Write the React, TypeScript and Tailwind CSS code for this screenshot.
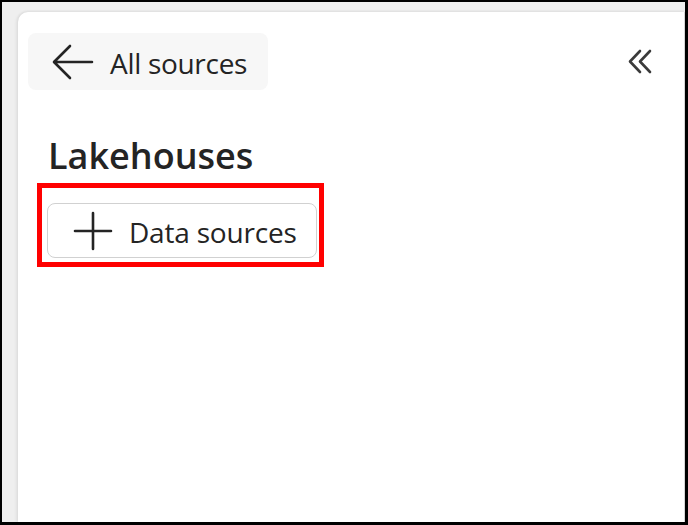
import React from "react";

const font = { fontFamily: '"Open Sans", "Noto Sans", Arial, sans-serif' };

function ArrowLeft() {
  return (
    <svg width="42" height="36" viewBox="0 0 42 36" fill="none">
      <path d="M40 18H3M18 2L2 18l16 16" stroke="#242424" strokeWidth="2.6" strokeLinecap="round" strokeLinejoin="round" />
    </svg>
  );
}

function ChevronsLeft() {
  return (
    <svg width="25" height="25" viewBox="0 0 25 25" fill="none">
      <path d="M13 2L3 12.5 13 23M23 2L13 12.5 23 23" stroke="#3b3b3b" strokeWidth="2.6" strokeLinecap="round" strokeLinejoin="round" />
    </svg>
  );
}

function Plus() {
  return (
    <svg width="40" height="40" viewBox="0 0 40 40" fill="none">
      <path d="M20 2v36M2 20h36" stroke="#242424" strokeWidth="2.6" strokeLinecap="round" />
    </svg>
  );
}

export default function App() {
  return (
    <div className="w-[688px] h-[525px] box-border border-l-2 border-t-2 border-r-[3px] border-b-[3px] border-black bg-[#efefef] flex" style={font}>
      <div className="flex-1 flex pl-[16px] pt-[10px]">
        <div className="flex-1 bg-white rounded-tl-[10px] border-r border-[#d6d6d6] shadow-[-2px_0_3px_rgba(0,0,0,0.06),0_-1px_3px_rgba(0,0,0,0.05)] flex flex-col pt-[21px]">
          <div className="flex items-center justify-between pl-[10px] pr-[32px]">
            <div className="h-[57px] w-[240px] rounded-[8px] bg-[#f7f7f7] flex items-center pl-[24px] gap-[16px]">
              <ArrowLeft />
              <span className="text-[28px] text-[#242424] leading-none tracking-[-0.3px] pt-[3px]">All sources</span>
            </div>
            <ChevronsLeft />
          </div>
          <h2 className="mt-[48px] pl-[30px] text-[36px] font-semibold text-[#242424] leading-none">Lakehouses</h2>
          <div className="mt-[9px] ml-[19px] w-[287px] h-[84px] box-border border-[5px] border-[#ff0000] pl-[5px] pt-[15px]">
            <div className="w-[270px] h-[55px] box-border rounded-[8px] border border-[#d1d1d1] flex items-center pl-[25px] gap-[16px]">
              <Plus />
              <span className="text-[28px] text-[#242424] leading-none tracking-[-0.2px] pt-[3px]">Data sources</span>
            </div>
          </div>
        </div>
      </div>
    </div>
  );
}
